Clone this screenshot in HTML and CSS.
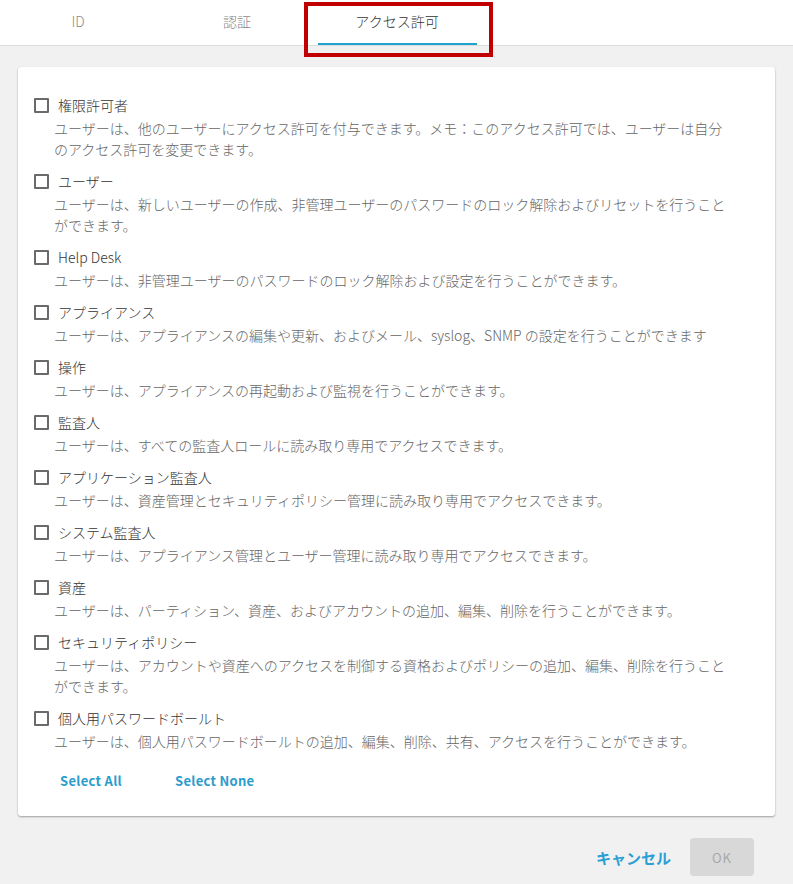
FILE: index.html
```html
<!DOCTYPE html>
<html lang="ja">
<head>
<meta charset="utf-8">
<link rel="stylesheet" href="styles.css">
</head>
<body>
<div class="page">
  <nav class="tabs">
    <div class="tab">ID</div>
    <div class="tab">認証</div>
    <div class="tab active">アクセス許可<span class="highlight"></span></div>
  </nav>
  <main class="content">
    <section class="card">
      <ul class="perm-list">
        <li class="perm">
          <label class="perm-title"><span class="box"></span>権限許可者</label>
          <p class="perm-desc">ユーザーは、他のユーザーにアクセス許可を付与できます。メモ：このアクセス許可では、ユーザーは自分のアクセス許可を変更できます。</p>
        </li>
        <li class="perm">
          <label class="perm-title"><span class="box"></span>ユーザー</label>
          <p class="perm-desc">ユーザーは、新しいユーザーの作成、非管理ユーザーのパスワードのロック解除およびリセットを行うことができます。</p>
        </li>
        <li class="perm">
          <label class="perm-title"><span class="box"></span>Help Desk</label>
          <p class="perm-desc">ユーザーは、非管理ユーザーのパスワードのロック解除および設定を行うことができます。</p>
        </li>
        <li class="perm">
          <label class="perm-title"><span class="box"></span>アプライアンス</label>
          <p class="perm-desc">ユーザーは、アプライアンスの編集や更新、およびメール、syslog、SNMP の設定を行うことができます</p>
        </li>
        <li class="perm">
          <label class="perm-title"><span class="box"></span>操作</label>
          <p class="perm-desc">ユーザーは、アプライアンスの再起動および監視を行うことができます。</p>
        </li>
        <li class="perm">
          <label class="perm-title"><span class="box"></span>監査人</label>
          <p class="perm-desc">ユーザーは、すべての監査人ロールに読み取り専用でアクセスできます。</p>
        </li>
        <li class="perm">
          <label class="perm-title"><span class="box"></span>アプリケーション監査人</label>
          <p class="perm-desc">ユーザーは、資産管理とセキュリティポリシー管理に読み取り専用でアクセスできます。</p>
        </li>
        <li class="perm">
          <label class="perm-title"><span class="box"></span>システム監査人</label>
          <p class="perm-desc">ユーザーは、アプライアンス管理とユーザー管理に読み取り専用でアクセスできます。</p>
        </li>
        <li class="perm">
          <label class="perm-title"><span class="box"></span>資産</label>
          <p class="perm-desc">ユーザーは、パーティション、資産、およびアカウントの追加、編集、削除を行うことができます。</p>
        </li>
        <li class="perm">
          <label class="perm-title"><span class="box"></span>セキュリティポリシー</label>
          <p class="perm-desc">ユーザーは、アカウントや資産へのアクセスを制御する資格およびポリシーの追加、編集、削除を行うことができます。</p>
        </li>
        <li class="perm">
          <label class="perm-title"><span class="box"></span>個人用パスワードボールト</label>
          <p class="perm-desc">ユーザーは、個人用パスワードボールトの追加、編集、削除、共有、アクセスを行うことができます。</p>
        </li>
      </ul>
      <div class="select-row">
        <button class="link-btn">Select All</button>
        <button class="link-btn">Select None</button>
      </div>
    </section>
    <footer class="actions">
      <button class="cancel">キャンセル</button>
      <button class="ok" disabled>OK</button>
    </footer>
  </main>
</div>
</body>
</html>
```

FILE: styles.css
```css
* { box-sizing: border-box; }
html, body {
  margin: 0;
  padding: 0;
  background: #f1f1f1;
  font-family: "Noto Sans CJK JP", "Noto Sans", sans-serif;
  color: #333;
}
.page {
  width: 793px;
  min-height: 884px;
}
.tabs {
  display: flex;
  height: 46px;
  background: #fff;
  border-bottom: 1px solid #dcdcdc;
}
.tab {
  position: relative;
  width: 160px;
  margin-left: -1px;
  text-align: center;
  font-size: 14px;
  font-weight: 300;
  line-height: 43px;
  color: #8a8a8a;
}
.tab:first-child { margin-left: -2px; }
.tab.active {
  color: #333;
  margin-left: 0;
}
.tab.active::after {
  content: "";
  position: absolute;
  left: 1px;
  right: 0;
  bottom: 0;
  height: 2px;
  background: #1fa2cf;
}
.highlight {
  position: absolute;
  left: -13px;
  top: 2px;
  width: 189px;
  height: 55px;
  border: 4px solid #c00000;
  z-index: 5;
}
.content {
  padding: 21px 18px 0;
}
.card {
  background: #fff;
  border-radius: 3px;
  box-shadow: 0 1px 2px rgba(0,0,0,0.35);
  padding: 25px 16px 18px;
}
.perm-list {
  list-style: none;
  margin: 0;
  padding: 0;
  display: flex;
  flex-direction: column;
  gap: 8px;
}
.perm-title {
  display: flex;
  align-items: center;
  gap: 9px;
  font-size: 14px;
  font-weight: 300;
  line-height: 26px;
  color: #333;
}
.box {
  width: 15px;
  height: 15px;
  border: 2px solid #6a6a6a;
  border-radius: 1px;
  flex: none;
}
.perm-desc {
  margin: 0 0 0 20px;
  width: 674px;
  font-size: 14px;
  font-weight: 300;
  line-height: 21px;
  color: #666;
}
.select-row {
  display: flex;
  gap: 53px;
  height: 36px;
  align-items: center;
  margin-top: 10px;
  padding-left: 26px;
}
.link-btn {
  background: none;
  border: 0;
  padding: 0;
  font-family: "Noto Sans CJK JP", "Noto Sans", sans-serif;
  font-size: 13px;
  font-weight: 600;
  letter-spacing: 0.3px;
  color: #2c9ccc;
}
.actions {
  display: flex;
  justify-content: flex-end;
  align-items: center;
  gap: 19px;
  margin-top: 22px;
  padding-right: 21px;
}
.cancel {
  background: none;
  border: 0;
  padding: 0;
  font-family: "Noto Sans CJK JP", sans-serif;
  font-size: 15px;
  font-weight: 700;
  color: #2a9fd4;
}
.ok {
  width: 64px;
  height: 38px;
  border: 0;
  border-radius: 4px;
  background: #d8d8d8;
  color: #a8a8a8;
  font-family: "Noto Sans CJK JP", sans-serif;
  font-size: 13px;
  letter-spacing: 1px;
}
```
